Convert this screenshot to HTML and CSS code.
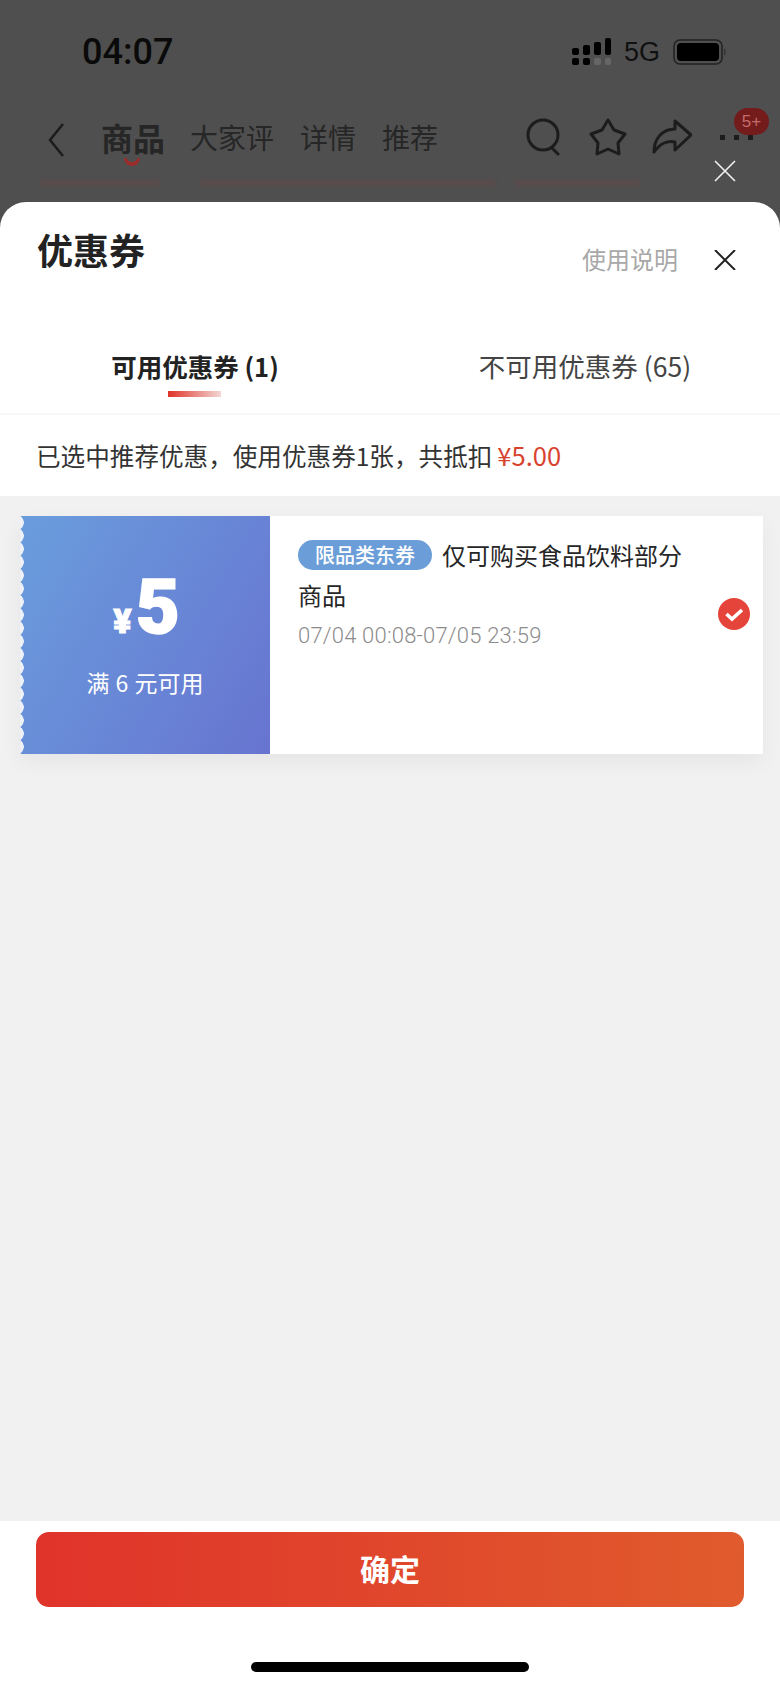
FILE: index.html
```html
<!DOCTYPE html>
<html lang="zh-CN">

<head>
    <meta charset="UTF-8">
    <meta name="viewport" content="width=device-width, initial-scale=1.0">
    <title>优惠券</title>
    <link rel="stylesheet" href="styles.css">
</head>

<body>
    <div class="page">
        <div class="status">
            <span class="time">04:07</span>
            <div class="status-right">
                <svg class="signal" width="40" height="28" viewBox="0 0 40 28">
                    <rect x="1" y="10" width="7" height="7" rx="2" fill="#000" />
                    <rect x="12" y="7" width="7" height="10" rx="2" fill="#000" />
                    <rect x="23" y="4" width="7" height="13" rx="2" fill="#000" />
                    <rect x="34" y="0" width="6" height="17" rx="2" fill="#000" />
                    <rect x="1" y="20" width="7" height="7" rx="2" fill="#000" />
                    <rect x="12" y="20" width="7" height="7" rx="2" fill="#000" />
                    <rect x="23" y="20" width="7" height="7" rx="2" fill="#666" />
                    <rect x="34" y="20" width="6" height="7" rx="2" fill="#666" />
                </svg>
                <span class="net">5G</span>
                <svg class="battery" width="54" height="26" viewBox="0 0 54 26">
                    <rect x="1" y="1" width="48" height="24" rx="6" fill="none" stroke="#222" stroke-width="1.5" />
                    <rect x="4" y="4" width="42" height="18" rx="4" fill="#000" />
                    <rect x="51" y="10" width="1.5" height="6" fill="#333" />
                </svg>
            </div>
        </div>

        <div class="nav">
            <svg class="back" width="18" height="36" viewBox="0 0 18 36">
                <path d="M16 2 L3 18 L16 34" fill="none" stroke="#1c1c1c" stroke-width="2.5" />
            </svg>
            <div class="nav-tabs">
                <span class="nav-tab active">商品</span>
                <span class="nav-tab">大家评</span>
                <span class="nav-tab">详情</span>
                <span class="nav-tab">推荐</span>
            </div>
            <div class="nav-icons">
                <svg class="search" width="36" height="38" viewBox="0 0 36 38">
                    <circle cx="17" cy="17" r="15" fill="none" stroke="#1c1c1c" stroke-width="3" />
                    <path d="M26 30 L32 36" stroke="#1c1c1c" stroke-width="3" stroke-linecap="round" />
                </svg>
                <svg width="38" height="38" viewBox="0 0 38 38">
                    <path d="M19 2 L25 12 L36 16 L29 25 L30 36 L19 31 L8 36 L9 25 L2 16 L13 12 Z" fill="none" stroke="#1c1c1c" stroke-width="3" stroke-linejoin="round" />
                </svg>
                <svg width="40" height="36" viewBox="0 0 40 36">
                    <path d="M2 33 C2 20 10 10 23 10 L23 2 L39 16 L23 31 L23 23 C14 21 8 25 2 33 Z" fill="none" stroke="#1c1c1c" stroke-width="3" stroke-linejoin="round" />
                </svg>
                <div class="more">
                    <i></i><i></i><i></i>
                    <span class="badge">5+</span>
                </div>
            </div>
        </div>

        <div class="peek">
            <span class="peek-bar bar-a"></span>
            <span class="peek-bar bar-b"></span>
            <span class="peek-bar bar-c"></span>
            <svg class="peek-close" width="24" height="22" viewBox="0 0 24 22">
                <path d="M2 1 L22 21 M22 1 L2 21" stroke="#f2f2f2" stroke-width="1.6" />
            </svg>
        </div>

        <div class="sheet">
            <div class="sheet-head">
                <h1 class="sheet-title">优惠券</h1>
                <span class="help">使用说明</span>
                <svg class="close" width="22" height="20" viewBox="0 0 22 20">
                    <path d="M1 0 L21 20 M21 0 L1 20" stroke="#222" stroke-width="2" />
                </svg>
            </div>

            <div class="tabs">
                <div class="tab active">可用优惠券 (1)</div>
                <div class="tab">不可用优惠券 (65)</div>
            </div>

            <div class="summary">已选中推荐优惠，使用优惠券1张，共抵扣<span class="amount">¥5.00</span></div>

            <div class="list">
                <div class="coupon">
                    <div class="coupon-left">
                        <div class="price"><span class="yen">¥</span><span class="num">5</span></div>
                        <div class="limit">满 6 元可用</div>
                    </div>
                    <div class="coupon-right">
                        <div class="coupon-info">
                            <div class="name-line"><span class="tag">限品类东券</span><span>仅可购买食品饮料部分</span></div>
                            <div class="name-line">商品</div>
                            <div class="coupon-date">07/04 00:08-07/05 23:59</div>
                        </div>
                        <svg class="check" width="32" height="32" viewBox="0 0 32 32">
                            <circle cx="16" cy="16" r="16" fill="#e5443a" />
                            <path d="M8.5 16 L14 21 L24 12" fill="none" stroke="#fff" stroke-width="3.6" />
                        </svg>
                    </div>
                </div>
            </div>

            <div class="footer">
                <button class="confirm">确定</button>
                <div class="home-bar"></div>
            </div>
        </div>
    </div>
</body>

</html>
```

FILE: styles.css
```css
* {
    padding: 0;
    margin: 0;
    box-sizing: border-box;
}

body {
    background: #4f4f4f;
    font-family: "Noto Sans CJK SC", "Noto Sans", sans-serif;
}

div.page {
    width: 780px;
    height: 1688px;
    display: flex;
    flex-direction: column;
    overflow: hidden;
}

/* status bar */
.status {
    height: 102px;
    padding: 2px 53px 0 82px;
    display: flex;
    justify-content: space-between;
    align-items: center;
    flex-shrink: 0;
}

.time {
    font-family: Roboto, sans-serif;
    font-size: 36px;
    font-weight: 500;
    color: #0a0a0a;
}

.status-right {
    display: flex;
    align-items: center;
    gap: 13px;
}

.net {
    font-family: "Liberation Sans", sans-serif;
    font-size: 27px;
    color: #111;
}

/* product nav behind the sheet */
.nav {
    height: 70px;
    padding: 0 20px 0 47px;
    display: flex;
    align-items: center;
    flex-shrink: 0;
}

.back {
    margin-top: 5px;
}

.nav-tabs {
    margin-left: 36px;
    display: flex;
    align-items: center;
    gap: 26px;
}

.nav-tab {
    font-size: 28px;
    color: #262626;
}

.nav-tab.active {
    font-size: 32px;
    font-weight: 700;
    margin-right: -1px;
    position: relative;
}

.nav-tab.active::after {
    content: "";
    position: absolute;
    left: 23px;
    bottom: -6px;
    width: 16px;
    height: 8px;
    border-radius: 0 0 8px 8px;
    background: radial-gradient(ellipse 5px 4px at 50% 0, #4f4f4f 98%, #9a2c2c);
}

.nav-icons {
    margin-left: auto;
    display: flex;
    align-items: center;
    gap: 25px;
}

.search {
    margin-right: 2px;
}

.more {
    width: 44px;
    height: 30px;
    padding-left: 4px;
    display: flex;
    align-items: center;
    gap: 9px;
    position: relative;
    margin-left: -1px;
}

.more i {
    width: 5px;
    height: 5px;
    background: #1c1c1c;
}

.badge {
    position: absolute;
    left: 18px;
    top: -14px;
    width: 35px;
    height: 27px;
    border-radius: 14px;
    background: #741c1c;
    color: #c46c6c;
    font-family: "Liberation Sans", sans-serif;
    font-size: 17px;
    line-height: 27px;
    text-align: center;
}

.peek {
    height: 30px;
    display: flex;
    flex-shrink: 0;
    position: relative;
}

.peek-bar {
    height: 6px;
    margin-top: 8px;
    background: #5c4a4c;
    filter: blur(2px);
}

.bar-a {
    width: 120px;
    margin-left: 40px;
}

.bar-b {
    width: 295px;
    margin-left: 40px;
}

.bar-c {
    width: 125px;
    margin-left: 20px;
}

.peek-close {
    position: absolute;
    left: 713px;
    top: -12px;
}

/* coupon sheet */
.sheet {
    flex: 1;
    display: flex;
    flex-direction: column;
    background: #fff;
    border-radius: 26px 26px 0 0;
    overflow: hidden;
}

.sheet-head {
    height: 130px;
    padding: 22px 44px 0 37px;
    display: flex;
    align-items: flex-start;
    flex-shrink: 0;
}

.sheet-title {
    font-size: 36px;
    line-height: 50px;
    font-weight: 700;
    color: #222;
}

.help {
    margin-left: auto;
    margin-top: 17px;
    font-size: 24px;
    line-height: 36px;
    color: #a8a8a8;
}

.close {
    margin-left: 36px;
    margin-top: 26px;
}

.tabs {
    height: 83px;
    display: flex;
    flex-shrink: 0;
    border-bottom: 2px solid #f7f7f7;
}

.tab {
    width: 50%;
    padding-top: 14px;
    text-align: center;
    font-size: 26.5px;
    line-height: 40px;
    color: #444;
    position: relative;
}

.tab.active {
    font-size: 25.5px;
    font-weight: 700;
    color: #222;
}

.tab.active::after {
    content: "";
    position: absolute;
    left: 168px;
    top: 59px;
    width: 53px;
    height: 6px;
    background: linear-gradient(to right, #e0332a, #f3d6d3);
}

.summary {
    height: 81px;
    padding: 0 36px 2px;
    display: flex;
    align-items: center;
    flex-shrink: 0;
    font-size: 24.6px;
    color: #333;
}

.amount {
    margin-left: 5px;
    font-size: 25.5px;
    color: #d8432f;
}

.list {
    flex: 1;
    padding: 20px 17px 0 20px;
    background: #f1f1f1;
}

.coupon {
    height: 238px;
    display: flex;
    background: #fff;
    box-shadow: 0 8px 20px rgba(0, 0, 0, 0.05);
}

.coupon-left {
    width: 250px;
    padding-top: 49px;
    display: flex;
    flex-direction: column;
    align-items: center;
    background: linear-gradient(120deg, #6a9ddd, #6774d0);
    color: #fff;
    position: relative;
}

/* scalloped edge of the ticket */
.coupon-left::before {
    content: "";
    position: absolute;
    left: 0;
    top: 0;
    width: 4px;
    height: 100%;
    background: radial-gradient(circle at -4px 50%, #eef2f8 7.5px, transparent 8px) 0 0 / 4px 13.2px repeat-y;
}

.price {
    display: flex;
    align-items: baseline;
    margin-left: 3px;
}

.yen {
    font-family: Roboto, sans-serif;
    font-size: 34px;
    font-weight: 900;
    -webkit-text-stroke: 1px #fff;
    margin-right: 4px;
}

.num {
    font-family: Roboto, sans-serif;
    font-size: 76px;
    line-height: 84px;
    font-weight: 900;
    -webkit-text-stroke: 1.5px #fff;
}

.limit {
    margin-top: 17px;
    font-size: 23px;
    word-spacing: 1px;
    line-height: 32px;
    white-space: pre;
}

.coupon-right {
    flex: 1;
    padding: 19px 13px 0 28px;
    display: flex;
    justify-content: space-between;
}

.coupon-info {
    width: 385px;
}

.name-line {
    display: flex;
    align-items: center;
    font-size: 24px;
    line-height: 40px;
    color: #262626;
}

.tag {
    width: 134px;
    height: 30px;
    margin-right: 10px;
    border-radius: 15px;
    background: #6b9ed8;
    color: #fff;
    font-size: 20px;
    font-weight: 500;
    line-height: 29px;
    text-align: center;
}

.coupon-date {
    margin-top: 6px;
    font-family: Roboto, sans-serif;
    font-size: 22px;
    font-weight: 300;
    letter-spacing: 0.2px;
    line-height: 30px;
    color: #8c8c8c;
}

.check {
    margin-top: 63px;
}

.footer {
    height: 167px;
    padding: 11px 36px 0;
    display: flex;
    flex-direction: column;
    align-items: center;
    flex-shrink: 0;
    background: #fff;
}

.confirm {
    width: 100%;
    height: 75px;
    padding-bottom: 4px;
    border: none;
    border-radius: 13px;
    background: linear-gradient(to right, #e0332a, #e05b2d);
    color: #fff;
    font-family: "Noto Sans CJK SC", sans-serif;
    font-size: 30px;
    font-weight: 700;
}

.home-bar {
    width: 278px;
    height: 10px;
    margin-top: 55px;
    border-radius: 5px;
    background: #000;
}
```
